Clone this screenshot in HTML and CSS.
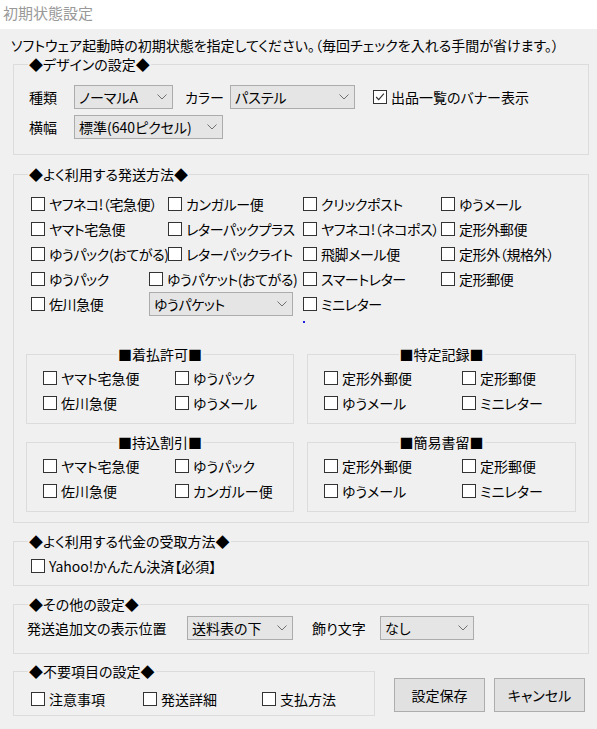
FILE: index.html
```html
<!DOCTYPE html>
<html lang="ja">
<head>
    <meta charset="UTF-8">
    <title>初期状態設定</title>
    <link rel="stylesheet" href="styles.css">
</head>
<body>
    <div class="titlebar">初期状態設定</div>
    <div class="dialog">
        <p class="intro">ソフトウェア起動時の初期状態を指定してください。（毎回チェックを入れる手間が省けます。）</p>

        <fieldset class="group design">
            <legend>◆デザインの設定◆</legend>
            <div class="inner">
                <div class="row">
                    <span class="lbl w45">種類</span>
                    <div class="combo w99"><span>ノーマルA</span><svg class="chev" viewBox="0 0 10 6"><path d="M0.5 0.5 L5 5 L9.5 0.5"/></svg></div>
                    <span class="lbl w45 ml12">カラー</span>
                    <div class="combo w125"><span>パステル</span><svg class="chev" viewBox="0 0 10 6"><path d="M0.5 0.5 L5 5 L9.5 0.5"/></svg></div>
                    <label class="cb ml18"><span class="box"><svg viewBox="0 0 14 14"><path d="M2.5 7 L5.5 10 L11.5 3"/></svg></span>出品一覧のバナー表示</label>
                </div>
                <div class="row">
                    <span class="lbl w45">横幅</span>
                    <div class="combo w149"><span>標準(640ピクセル)</span><svg class="chev" viewBox="0 0 10 6"><path d="M0.5 0.5 L5 5 L9.5 0.5"/></svg></div>
                </div>
            </div>
        </fieldset>

        <fieldset class="group ship">
            <legend>◆よく利用する発送方法◆</legend>
            <div class="inner">
                <div class="ship-grid">
                    <label class="cb c1"><span class="box"></span>ヤフネコ!（宅急便）</label>
                    <label class="cb c2"><span class="box"></span>カンガルー便</label>
                    <label class="cb c3"><span class="box"></span>クリックポスト</label>
                    <label class="cb c4"><span class="box"></span>ゆうメール</label>

                    <label class="cb c1"><span class="box"></span>ヤマト宅急便</label>
                    <label class="cb c2"><span class="box"></span>レターパックプラス</label>
                    <label class="cb c3"><span class="box"></span>ヤフネコ!（ネコポス）</label>
                    <label class="cb c4"><span class="box"></span>定形外郵便</label>

                    <label class="cb c1"><span class="box"></span>ゆうパック(おてがる)</label>
                    <label class="cb c2"><span class="box"></span>レターパックライト</label>
                    <label class="cb c3"><span class="box"></span>飛脚メール便</label>
                    <label class="cb c4"><span class="box"></span>定形外（規格外）</label>

                    <label class="cb c1"><span class="box"></span>ゆうパック</label>
                    <label class="cb c2w"><span class="box"></span>ゆうパケット(おてがる)</label>
                    <label class="cb c3"><span class="box"></span>スマートレター</label>
                    <label class="cb c4"><span class="box"></span>定形郵便</label>

                    <label class="cb c1"><span class="box"></span>佐川急便</label>
                    <div class="combo w144 c2w"><span>ゆうパケット</span><svg class="chev" viewBox="0 0 10 6"><path d="M0.5 0.5 L5 5 L9.5 0.5"/></svg></div>
                    <label class="cb c3"><span class="box"></span>ミニレター</label>
                </div>
                <div class="dot"></div>

                <div class="subs">
                    <fieldset class="sub">
                        <legend>■着払許可■</legend>
                        <div class="sub-grid">
                            <label class="cb"><span class="box"></span>ヤマト宅急便</label>
                            <label class="cb"><span class="box"></span>ゆうパック</label>
                            <label class="cb"><span class="box"></span>佐川急便</label>
                            <label class="cb"><span class="box"></span>ゆうメール</label>
                        </div>
                    </fieldset>
                    <fieldset class="sub right">
                        <legend>■特定記録■</legend>
                        <div class="sub-grid">
                            <label class="cb"><span class="box"></span>定形外郵便</label>
                            <label class="cb"><span class="box"></span>定形郵便</label>
                            <label class="cb"><span class="box"></span>ゆうメール</label>
                            <label class="cb"><span class="box"></span>ミニレター</label>
                        </div>
                    </fieldset>
                    <fieldset class="sub">
                        <legend>■持込割引■</legend>
                        <div class="sub-grid">
                            <label class="cb"><span class="box"></span>ヤマト宅急便</label>
                            <label class="cb"><span class="box"></span>ゆうパック</label>
                            <label class="cb"><span class="box"></span>佐川急便</label>
                            <label class="cb"><span class="box"></span>カンガルー便</label>
                        </div>
                    </fieldset>
                    <fieldset class="sub right">
                        <legend>■簡易書留■</legend>
                        <div class="sub-grid">
                            <label class="cb"><span class="box"></span>定形外郵便</label>
                            <label class="cb"><span class="box"></span>定形郵便</label>
                            <label class="cb"><span class="box"></span>ゆうメール</label>
                            <label class="cb"><span class="box"></span>ミニレター</label>
                        </div>
                    </fieldset>
                </div>
            </div>
        </fieldset>

        <fieldset class="group payment">
            <legend>◆よく利用する代金の受取方法◆</legend>
            <div class="inner">
                <label class="cb"><span class="box"></span>Yahoo!かんたん決済【必須】</label>
            </div>
        </fieldset>

        <fieldset class="group other">
            <legend>◆その他の設定◆</legend>
            <div class="inner row">
                <span class="lbl w160">発送追加文の表示位置</span>
                <div class="combo w106"><span>送料表の下</span><svg class="chev" viewBox="0 0 10 6"><path d="M0.5 0.5 L5 5 L9.5 0.5"/></svg></div>
                <span class="lbl w68 ml19">飾り文字</span>
                <div class="combo w94"><span>なし</span><svg class="chev" viewBox="0 0 10 6"><path d="M0.5 0.5 L5 5 L9.5 0.5"/></svg></div>
            </div>
        </fieldset>

        <div class="bottom">
            <fieldset class="group hide">
                <legend>◆不要項目の設定◆</legend>
                <div class="inner row">
                    <label class="cb w112"><span class="box"></span>注意事項</label>
                    <label class="cb w119"><span class="box"></span>発送詳細</label>
                    <label class="cb"><span class="box"></span>支払方法</label>
                </div>
            </fieldset>
            <div class="buttons">
                <button>設定保存</button>
                <button>キャンセル</button>
            </div>
        </div>
    </div>
</body>
</html>
```

FILE: styles.css
```css
body {
    margin: 0;
    padding: 0;
    font-family: "Noto Sans CJK JP", "Noto Sans", sans-serif;
    font-size: 14px;
    line-height: 18px;
    font-feature-settings: "palt";
    color: #000;
    background-color: #fff;
}
.titlebar {
    height: 29px;
    line-height: 26px;
    padding-left: 3px;
    font-size: 15px;
    color: #999;
    background-color: #fff;
}
.dialog {
    height: 700px;
    background-color: #f0f0f0;
    padding: 7px 8px 0 13px;
    box-sizing: border-box;
    overflow: hidden;
}
.intro {
    margin: 0 0 0 -2px;
    height: 18px;
    white-space: nowrap;
}
fieldset {
    margin: 0;
    padding: 0;
    border: 1px solid #dcdcdc;
    min-width: 0;
}
legend {
    padding: 0 1px;
    margin-left: 14px;
    height: 18px;
    line-height: 18px;
    white-space: nowrap;
}
.group {
    margin-top: 1px;
}
.row {
    display: flex;
    align-items: center;
    height: 25px;
    white-space: nowrap;
}
.lbl {
    display: inline-block;
}
.w45 { width: 45px; }
.w68 { width: 68px; }
.w160 { width: 160px; }
.w112 { width: 112px; }
.w119 { width: 119px; }
.ml12 { margin-left: 12px; }
.ml18 { margin-left: 18px; }
.ml19 { margin-left: 19px; }

/* combo boxes */
.combo {
    display: flex;
    align-items: center;
    justify-content: space-between;
    height: 24px;
    box-sizing: border-box;
    padding: 0 5px 0 4px;
    background-color: #e5e5e5;
    border: 1px solid #acacac;
    white-space: nowrap;
}
.w94 { width: 94px; }
.w99 { width: 99px; }
.w106 { width: 106px; }
.w125 { width: 125px; }
.w144 { width: 144px; }
.w149 { width: 149px; }
.chev {
    width: 10px;
    height: 6px;
    flex-shrink: 0;
}
.chev path {
    fill: none;
    stroke: #707070;
    stroke-width: 1;
}

/* check boxes */
.cb {
    display: flex;
    align-items: center;
    height: 25px;
    white-space: nowrap;
}
.box {
    width: 14px;
    height: 14px;
    box-sizing: border-box;
    border: 1px solid #333;
    background-color: #fff;
    margin-right: 4px;
    flex-shrink: 0;
}
.box svg {
    display: block;
    width: 12px;
    height: 12px;
}
.box svg path {
    fill: none;
    stroke: #333;
    stroke-width: 1.4;
}

/* design */
.design .inner {
    padding: 11px 0 15px 15px;
}
.design .row + .row {
    margin-top: 5px;
}

/* shipping */
.ship {
    margin-top: 10px;
}
.ship .inner {
    padding: 0 0 10px 12px;
}
.ship-grid {
    display: grid;
    grid-template-columns: 118px 19px 135px 138px 1fr;
    grid-auto-rows: 25px;
    padding: 8px 0 0 5px;
    letter-spacing: -0.4px;
}
.c1 { grid-column: 1; }
.c2 { grid-column: 3; }
.c2w { grid-column: 2 / 4; align-self: center; }
.c3 { grid-column: 4; }
.c4 { grid-column: 5; }
.dot {
    width: 2px;
    height: 2px;
    margin: 5px 0 0 277px;
    background-color: #2020e0;
}
.subs {
    display: grid;
    grid-template-columns: 268px 269px;
    column-gap: 13px;
    row-gap: 9px;
    margin-top: 22px;
}
.sub legend {
    margin: 0 auto;
}
.sub-grid {
    display: grid;
    grid-template-columns: 132px 1fr;
    grid-auto-rows: 25px;
    padding: 2px 0 8px 16px;
}
.sub.right .sub-grid {
    grid-template-columns: 138px 1fr;
}

/* payment */
.payment {
    margin-top: 9px;
}
.payment .inner {
    padding: 3px 0 7px 17px;
}

/* other */
.other {
    margin-top: 9px;
}
.other .inner {
    height: auto;
    padding: 3px 0 13px 13px;
}

/* bottom */
.bottom {
    display: flex;
    align-items: flex-start;
    margin-top: 8px;
}
.hide {
    margin-top: 0;
    width: 362px;
    box-sizing: border-box;
}
.hide .inner {
    height: auto;
    padding: 6px 0 4px 17px;
}
.buttons {
    display: flex;
    gap: 9px;
    margin: 16px 0 0 19px;
}
button {
    width: 91px;
    height: 34px;
    font-family: inherit;
    font-size: 14px;
    font-feature-settings: "palt";
    color: #000;
    background-color: #e1e1e1;
    border: 1px solid #adadad;
    padding: 0;
}
```
